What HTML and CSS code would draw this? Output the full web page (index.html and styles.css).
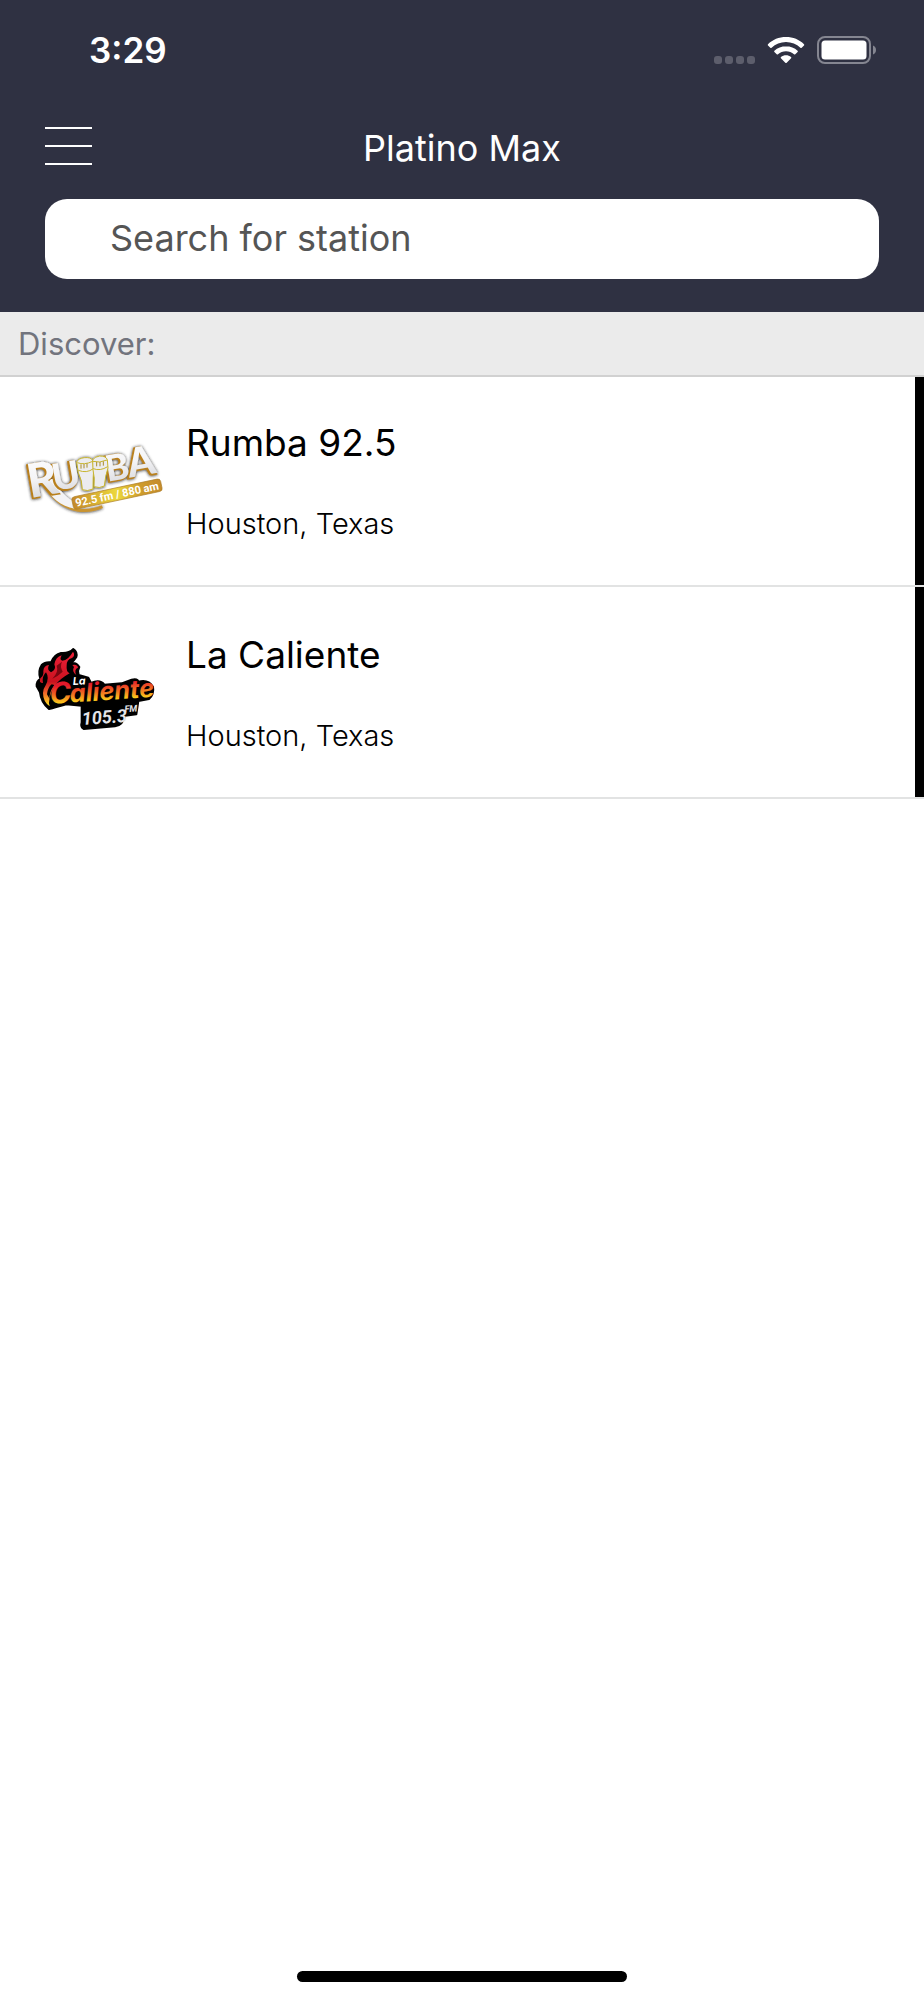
FILE: index.html
```html
<!DOCTYPE html>
<html lang="en">
<head>
  <meta charset="UTF-8" />
  <meta name="viewport" content="width=device-width, initial-scale=1.0"/>
  <title>Platino Max</title>
  <link rel="stylesheet" href="styles.css">
</head>
<body>

<header class="app-header">
  <div class="status-bar">
    <span class="time">3:29</span>
    <div class="status-icons">
      <div class="signal"><i></i><i></i><i></i><i></i></div>
      <svg class="wifi" width="38" height="28" viewBox="0 0 38 28" aria-hidden="true">
        <path fill="#fff" d="M19 1C12 1 5.500 3.600 1 8.200c-.4.400-.4.900 0 1.300l2.300 2.300c.4.400.9.400 1.300 0C8.400 8.100 13.500 6 19 6s10.600 2.100 14.400 5.800c.4.400.9.400 1.300 0L37 9.500c.4-.4.400-.9 0-1.300C32.500 3.600 26 1 19 1z"/>
        <path fill="#fff" d="M19 10.300c-4.400 0-8.500 1.600-11.600 4.400-.4.400-.4.900 0 1.300l2.300 2.300c.4.400.9.400 1.300 0 2.200-1.900 5-3 8-3s5.800 1.100 8 3c.4.400.9.400 1.300 0l2.300-2.300c.4-.4.400-.9 0-1.300-3.100-2.800-7.200-4.400-11.600-4.400z"/>
        <path fill="#fff" d="M19 19.300c-1.900 0-3.600.6-5 1.700-.5.400-.5.900-.1 1.300l4.400 4.400c.4.400 1 .4 1.400 0l4.400-4.400c.4-.4.400-.9-.1-1.300-1.400-1.100-3.100-1.700-5-1.700z"/>
      </svg>
      <svg class="battery" width="60" height="28" viewBox="0 0 60 28" aria-hidden="true">
        <rect x="1" y="1" width="52" height="26" rx="7" fill="none" stroke="#858691" stroke-width="2"/>
        <rect x="4.500" y="4.500" width="45" height="19" rx="3.500" fill="#fff"/>
        <path d="M56 9.500c2 .8 3 2.500 3 4.500s-1 3.700-3 4.500z" fill="#858691"/>
      </svg>
    </div>
  </div>

  <div class="nav-bar">
    <button class="menu-btn" type="button" aria-label="Menu">
      <span></span>
      <span></span>
      <span></span>
    </button>
    <h1>Platino Max</h1>
  </div>

  <input class="search" type="text" placeholder="Search for station" aria-label="Search for station">
</header>

<main>
  <h2 class="section-title">Discover:</h2>
  <ul class="stations">
    <li>
      <a class="station" href="#rumba">
        <svg class="logo" viewBox="21 -12 432 300" aria-hidden="true">
          <defs>
            <linearGradient id="gold" x1="0" x2="1">
              <stop offset="0" stop-color="#c4882a"/>
              <stop offset=".5" stop-color="#ecd83c"/>
              <stop offset=".75" stop-color="#cf9d2c"/>
              <stop offset="1" stop-color="#c58b2b"/>
            </linearGradient>
            <linearGradient id="silver" x1="0" y1="0" x2="0" y2="1">
              <stop offset="0" stop-color="#fff"/>
              <stop offset=".5" stop-color="#f4f4f6"/>
              <stop offset="1" stop-color="#cfd0d5"/>
            </linearGradient>
            <filter id="shadow" x="-10%" y="-20%" width="120%" height="140%">
              <feDropShadow dx="0" dy="1" stdDeviation="4" flood-color="#222" flood-opacity="1"/>
            </filter>
          </defs>
          <g filter="url(#shadow)">
            <path d="M84 150 C112 192 145 221 187 228 Q225 234 262 218" fill="none" stroke="#c99432" stroke-width="9"/>
            <path d="M78 142 L114 134 C132 168 158 196 182 205 L180 224 C136 218 108 190 88 156z" fill="#f3f3f5"/>
            <g class="rumba-word" transform="translate(46 192) rotate(-10)">
              <text class="rumba-back" x="-4" y="2"><tspan font-size="140">R</tspan><tspan font-size="112" dx="-16" dy="-8">U</tspan><tspan font-size="108" dx="78" dy="0">B</tspan><tspan font-size="120" dx="-5">A</tspan></text>
              <text class="rumba-front"><tspan font-size="140">R</tspan><tspan font-size="112" dx="-16" dy="-8">U</tspan><tspan font-size="108" dx="78" dy="0">B</tspan><tspan font-size="120" dx="-5">A</tspan></text>
            </g>
            <!-- conga drums -->
            <g stroke="#c8b52f" stroke-width="3" fill="#ececef">
              <path d="M185 84 Q190 73 208 71 Q228 69 233 79 L236 108 Q234 128 234 165 Q217 173 202 167 Q202 140 190 116z"/>
              <path d="M233 78 Q238 68 254 66 Q273 66 277 77 L279 102 Q271 124 268 156 Q253 164 237 158 Q240 132 234 108z"/>
              <path d="M190 109 Q215 119 235 104 Q255 112 278 98" fill="none"/>
              <path d="M187 86 Q208 94 233 82 Q254 88 276 78" fill="none"/>
              <path d="M198 91v13M207 90v13M216 88v13M245 84v13M255 84v13M265 82v13" stroke="#aa8c2a"/>
            </g>
          </g>
          <g transform="translate(169 190) rotate(-12)">
            <rect width="272" height="38" rx="9" fill="url(#gold)" stroke="#ad7d28" stroke-width="2"/>
            <text class="rumba-freq" x="136" y="31" text-anchor="middle">92.5 fm / 880 am</text>
          </g>
        </svg>
        <div class="station-info">
          <h3>Rumba 92.5</h3>
          <p>Houston, Texas</p>
        </div>
      </a>
    </li>
    <li>
      <a class="station" href="#la-caliente">
        <svg class="logo" viewBox="-9 9 432 300" aria-hidden="true">
          <defs>
            <linearGradient id="fire" x1="0" y1="0" x2="0" y2="1">
              <stop offset=".3" stop-color="#e2192b"/>
              <stop offset=".55" stop-color="#ee6a22"/>
              <stop offset=".85" stop-color="#ffe11a"/>
            </linearGradient>
            <linearGradient id="flame" x1="0" y1="0" x2="0" y2="1">
              <stop offset="0" stop-color="#ee2038"/>
              <stop offset=".55" stop-color="#c9121f"/>
              <stop offset=".75" stop-color="#f0642a"/>
              <stop offset="1" stop-color="#ffe51c"/>
            </linearGradient>
          </defs>
          <path fill="#000" stroke="#000" stroke-width="6" stroke-linejoin="round" d="M145 30 Q158 38 154 54 Q147 66 136 74 Q152 68 163 84 Q156 96 161 108 L190 116 L198 132 Q225 120 238 137 L290 133 L320 122 Q338 118 340 128 Q370 120 384 143 Q388 166 372 180 L340 186 L334 226 L300 230 Q294 258 270 262 L176 270 Q166 264 170 250 L170 200 L124 196 Q90 206 72 210 Q48 190 45 160 L35 142 Q34 126 46 120 Q38 96 50 78 Q60 68 78 70 Q88 46 108 42 Q132 44 145 30z"/>
          <path fill="url(#flame)" d="M144 38 Q152 49 141 57 Q124 62 125 80 Q123 98 134 103 Q106 119 92 137 Q76 158 74 178 Q70 192 74 202 Q54 188 54 162 Q54 150 62 139 Q74 116 63 100 Q50 112 54 132 Q40 132 46 118 Q57 110 55 96 Q56 80 72 78 Q64 92 78 100 Q95 92 88 76 Q92 54 110 49 Q102 64 112 65 Q130 63 144 38z"/>
          <path fill="#7b0610" d="M111 68 Q104 82 113 98 Q101 110 82 119 Q102 99 95 80z"/>
          <path fill="#df1c2e" d="M142 78 Q157 75 159 86 Q146 91 154 108 Q139 98 147 84z"/>
          <path fill="#000" d="M88 138 Q72 160 74 180 L66 166 Q68 146 80 136z"/>
          <text class="cal-la" transform="translate(144 138) rotate(-3)">La</text>
          <text class="cal-word" transform="translate(76 195) rotate(-4)" fill="url(#fire)"><tspan font-size="88">C</tspan><tspan dx="-5">aliente</tspan></text>
          <text class="cal-freq" transform="translate(172 258) rotate(-4)">105.3</text>
          <text class="cal-fm" transform="translate(299 220) rotate(-4)">FM</text>
        </svg>
        <div class="station-info">
          <h3>La Caliente</h3>
          <p>Houston, Texas</p>
        </div>
      </a>
    </li>
  </ul>
</main>

<footer class="home-indicator"><span></span></footer>

</body>
</html>
```
FILE: styles.css
```css
* {
  box-sizing: border-box;
  margin: 0;
  padding: 0;
}

body {
  min-height: 100vh;
  display: flex;
  flex-direction: column;
  font-family: Inter, sans-serif;
  background-color: #fff;
  color: #000;
}

/* Header */
.app-header {
  background-color: #2f3142;
  padding: 0 45px 33px;
}

.status-bar {
  display: flex;
  justify-content: space-between;
  align-items: center;
  height: 100px;
  padding-left: 44px;
}

.time {
  color: #fff;
  font-size: 35px;
  font-weight: 600;
}

.status-icons {
  display: flex;
  align-items: center;
  gap: 12px;
  padding-right: 2px;
}

.signal {
  display: flex;
  gap: 3px;
  align-self: flex-end;
}

.signal i {
  width: 8px;
  height: 8px;
  border-radius: 3px;
  background-color: #5d5e6c;
}

.nav-bar {
  display: grid;
  grid-template-columns: 1fr auto 1fr;
  align-items: center;
  height: 92px;
  margin-bottom: 7px;
}

.menu-btn {
  display: flex;
  flex-direction: column;
  gap: 16px;
  width: 47px;
  background: none;
  border: none;
  cursor: pointer;
}

.menu-btn span {
  height: 2px;
  background-color: #fff;
}

.nav-bar h1 {
  padding-top: 4px;
  color: #fff;
  font-size: 36px;
  font-weight: 400;
}

.search {
  display: block;
  width: 100%;
  height: 80px;
  padding: 0 65px 2px;
  border: none;
  border-radius: 22px;
  background-color: #fff;
  color: #555;
  font-family: inherit;
  font-size: 36px;
}

.search::placeholder {
  color: #555;
  opacity: 1;
}

/* Station list */
.section-title {
  position: relative;
  height: 65px;
  margin-bottom: -2px;
  padding-left: 18px;
  border-bottom: 2px solid #d1d1d1;
  background-color: #ebebeb;
  color: #72747d;
  font-size: 31px;
  font-weight: 400;
  line-height: 64px;
}

.stations {
  list-style: none;
}

.stations li {
  border-bottom: 2px solid #e2e3e3;
}

.station {
  display: flex;
  align-items: center;
  gap: 20px;
  height: 210px;
  padding-left: 22px;
  border-right: 9px solid #000;
  color: #000;
  text-decoration: none;
}

.logo {
  width: 144px;
  height: 100px;
  flex-shrink: 0;
  overflow: visible;
}

.station-info {
  display: flex;
  flex-direction: column;
  gap: 41px;
  padding-top: 3px;
}

.station-info h3 {
  font-size: 37px;
  font-weight: 400;
  line-height: 44px;
}

.station-info p {
  font-size: 29px;
  font-weight: 300;
  line-height: 36px;
}

/* Logo lettering */
.rumba-word {
  font-family: Lato, sans-serif;
  font-weight: 900;
}

.rumba-back {
  fill: #b9801f;
  stroke: #b9801f;
  stroke-width: 5px;
}

.rumba-front {
  fill: url(#silver);
}

.rumba-freq {
  font-family: Roboto, sans-serif;
  font-size: 33px;
  font-weight: 700;
  fill: #fff;
}

.cal-la {
  font-family: Inter, sans-serif;
  font-size: 32px;
  font-weight: 700;
  font-style: italic;
  fill: #fff;
}

.cal-word {
  font-family: Inter, sans-serif;
  font-size: 76px;
  font-weight: 700;
  font-style: italic;
}

.cal-freq {
  font-family: Roboto, sans-serif;
  font-size: 54px;
  font-weight: 700;
  font-style: italic;
  fill: #e4e4e8;
}

.cal-fm {
  font-family: Roboto, sans-serif;
  font-size: 28px;
  font-weight: 700;
  font-style: italic;
  fill: #e4e4e8;
}

/* Home indicator */
.home-indicator {
  display: flex;
  justify-content: center;
  margin-top: auto;
  padding-bottom: 18px;
}

.home-indicator span {
  width: 330px;
  height: 11px;
  border-radius: 6px;
  background-color: #000;
}
```
